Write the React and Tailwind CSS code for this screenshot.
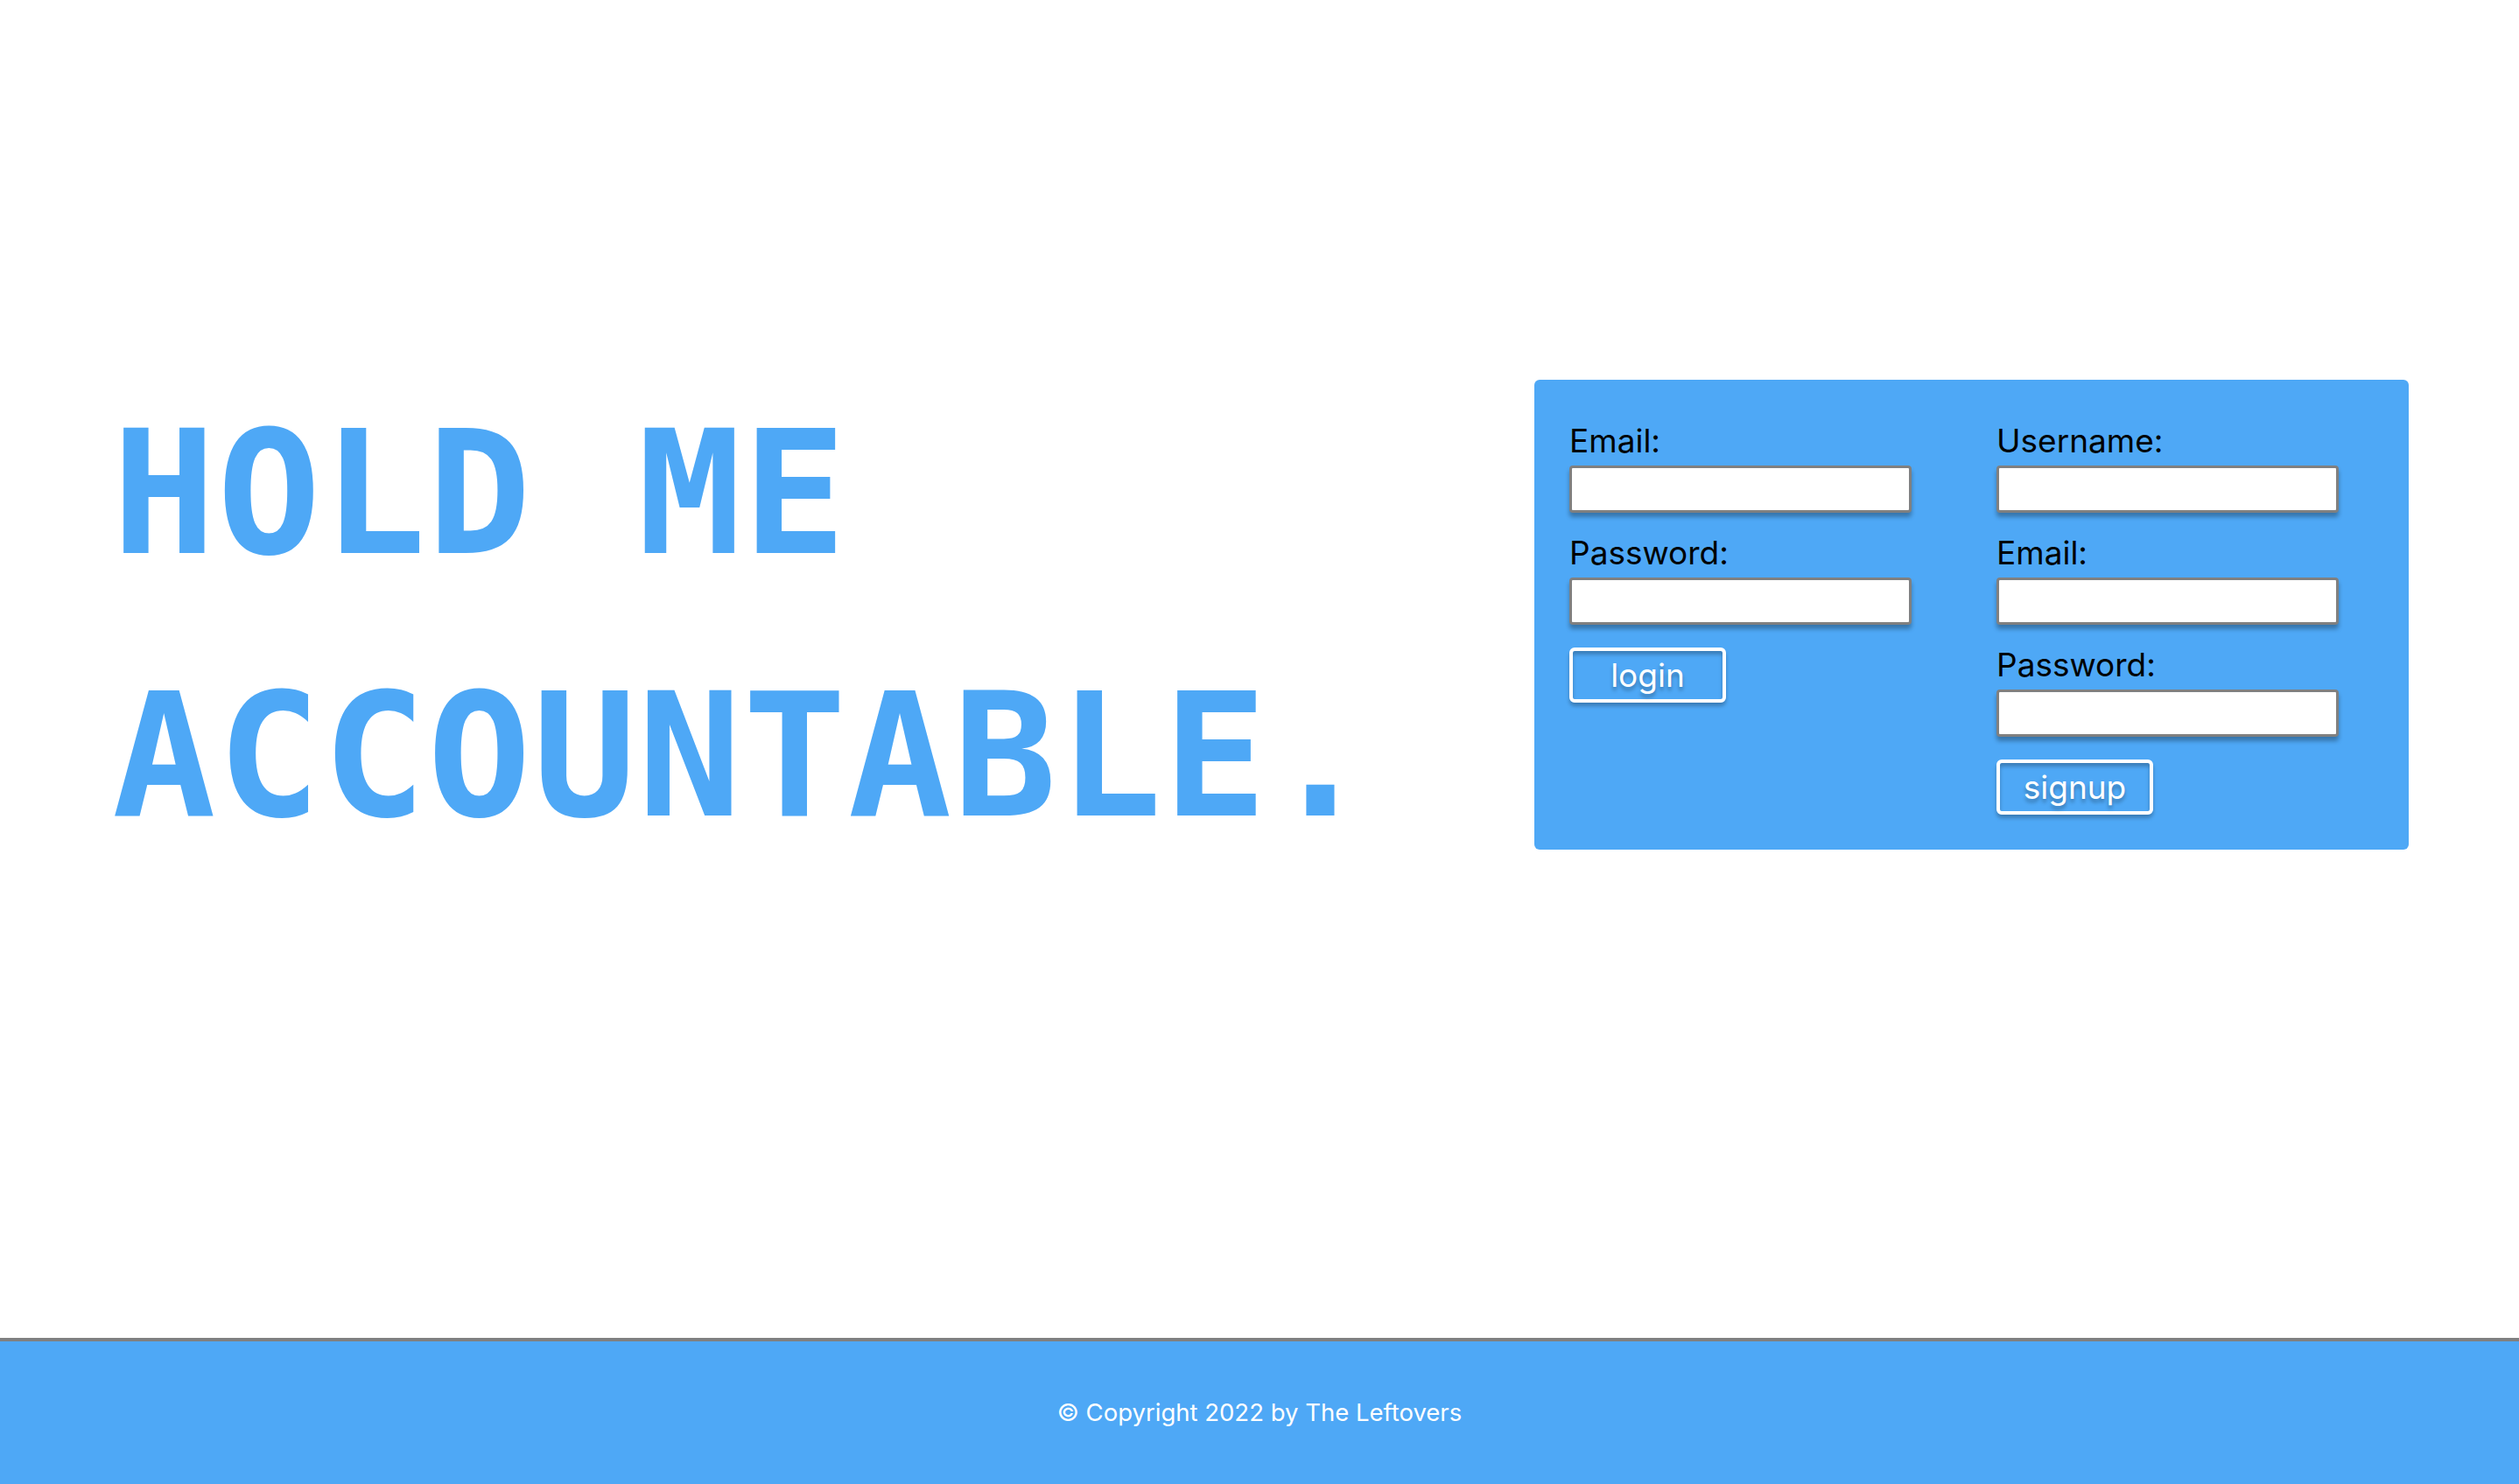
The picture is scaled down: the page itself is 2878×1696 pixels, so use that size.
import { useState } from "react";

const BLUE = "bg-[#4ea8f6]";

function Field({ label, type = "text", value, onChange }) {
  return (
    <label className="flex flex-col">
      <span className="text-[37px] leading-[44px] text-black">{label}</span>
      <input
        type={type}
        value={value}
        onChange={(e) => onChange(e.target.value)}
        className="mt-[6px] h-[54px] w-[391px] rounded-[4px] border-[3px] border-[#808080] bg-white px-2 text-[28px] shadow-[0_5px_5px_rgba(0,0,0,0.3)] outline-none"
      />
    </label>
  );
}

function SubmitButton({ children }) {
  return (
    <button
      type="submit"
      className="mt-[2px] h-[63px] w-[179px] rounded-[6px] border-4 border-white bg-transparent text-[37px] leading-none text-white shadow-[0_4px_4px_rgba(0,0,0,0.25),inset_0_4px_4px_rgba(0,0,0,0.25)] [text-shadow:0_4px_4px_rgba(0,0,0,0.3)]"
    >
      {children}
    </button>
  );
}

export default function App() {
  const [login, setLogin] = useState({ email: "", password: "" });
  const [signup, setSignup] = useState({ username: "", email: "", password: "" });

  return (
    <div className="flex min-h-screen flex-col bg-white font-['Inter','Noto_Sans',sans-serif]">
      <main className="flex flex-1 items-center justify-between pb-[124px] pl-[128px] pr-[126px]">
        <h1 className="mt-[22px] font-['DejaVu_Sans_Mono',monospace] text-[197px] font-bold leading-[300px] tracking-[1.5px] text-[#4ea8f6]">
          <span className="block">HOLD ME</span>
          <span className="block">ACCOUNTABLE.</span>
        </h1>

        <div className={`${BLUE} grid grid-cols-[391px_391px] gap-x-[97px] rounded-[6px] pb-[40px] pl-[40px] pr-[80px] pt-[48px]`}>
          <form className="flex flex-col items-start gap-[24px]" onSubmit={(e) => e.preventDefault()}>
            <Field label="Email:" type="email" value={login.email} onChange={(v) => setLogin({ ...login, email: v })} />
            <Field label="Password:" type="password" value={login.password} onChange={(v) => setLogin({ ...login, password: v })} />
            <SubmitButton>login</SubmitButton>
          </form>
          <form className="flex flex-col items-start gap-[24px]" onSubmit={(e) => e.preventDefault()}>
            <Field label="Username:" value={signup.username} onChange={(v) => setSignup({ ...signup, username: v })} />
            <Field label="Email:" type="email" value={signup.email} onChange={(v) => setSignup({ ...signup, email: v })} />
            <Field label="Password:" type="password" value={signup.password} onChange={(v) => setSignup({ ...signup, password: v })} />
            <SubmitButton>signup</SubmitButton>
          </form>
        </div>
      </main>

      <footer className={`${BLUE} flex h-[167px] items-center justify-center border-t-4 border-[#808080] text-[27.5px] text-white`}>
        © Copyright 2022 by The Leftovers
      </footer>
    </div>
  );
}
